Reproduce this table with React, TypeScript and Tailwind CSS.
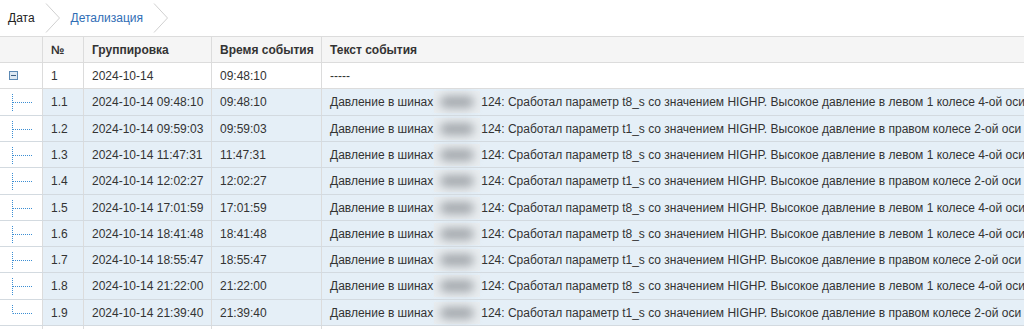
import React from "react";

type Row = {
  n: string;
  group: string;
  time: string;
  param: "t8_s" | "t1_s";
};

const rows: Row[] = [
  { n: "1.1", group: "2024-10-14 09:48:10", time: "09:48:10", param: "t8_s" },
  { n: "1.2", group: "2024-10-14 09:59:03", time: "09:59:03", param: "t1_s" },
  { n: "1.3", group: "2024-10-14 11:47:31", time: "11:47:31", param: "t8_s" },
  { n: "1.4", group: "2024-10-14 12:02:27", time: "12:02:27", param: "t1_s" },
  { n: "1.5", group: "2024-10-14 17:01:59", time: "17:01:59", param: "t8_s" },
  { n: "1.6", group: "2024-10-14 18:41:48", time: "18:41:48", param: "t8_s" },
  { n: "1.7", group: "2024-10-14 18:55:47", time: "18:55:47", param: "t1_s" },
  { n: "1.8", group: "2024-10-14 21:22:00", time: "21:22:00", param: "t8_s" },
  { n: "1.9", group: "2024-10-14 21:39:40", time: "21:39:40", param: "t1_s" },
];

// row heights so that lines land on whole pixels
const heights = [
  "h-[27px]",
  "h-[26px]",
  "h-[26px]",
  "h-[27px]",
  "h-[26px]",
  "h-[26px]",
  "h-[26px]",
  "h-[27px]",
  "h-[26px]",
];

const eventText = (p: Row["param"]) =>
  p === "t8_s"
    ? "124: Сработал параметр t8_s со значением HIGHP. Высокое давление в левом 1 колесе 4-ой оси"
    : "124: Сработал параметр t1_s со значением HIGHP. Высокое давление в правом колесе 2-ой оси Ведущего моста";

const Chevron = () => (
  <svg width="16" height="30" viewBox="0 0 16 30" className="shrink-0">
    <path d="M1 0.5 L14.5 15 L1 29.5" fill="none" stroke="#d0d0d0" strokeWidth="1" />
  </svg>
);

// tree connector for child rows
const TreeLine = ({ last }: { last: boolean }) => (
  <svg width="42" height="24" viewBox="0 0 42 24" className="block">
    <line
      x1="12.5"
      y1="4"
      x2="12.5"
      y2={last ? 12.5 : 21}
      stroke="#3b8ed3"
      strokeWidth="1"
      strokeDasharray="1 1"
    />
    <line x1="13" y1="12.5" x2="33" y2="12.5" stroke="#3b8ed3" strokeWidth="1" strokeDasharray="1 1" />
  </svg>
);

const Blur = () => (
  <span className="relative mx-[1px] inline-block h-[22px] w-[46px] shrink-0 bg-[#e9edf0] align-middle">
    <span className="absolute inset-x-[6px] inset-y-[5px] rounded-full bg-[#a3a8ad] blur-[5px]"></span>
  </span>
);

const grid = "grid grid-cols-[42px_41px_128px_110px_1fr] grid-rows-[minmax(0,1fr)]";
const cell = "flex min-h-0 items-center overflow-hidden whitespace-nowrap border-l border-[#dcdcdc] pl-2";

export default function App() {
  return (
    <div className="h-[329px] w-[1024px] overflow-hidden bg-white font-['Liberation_Sans',Arial,sans-serif] text-[12px] text-[#333]">
      {/* breadcrumbs */}
      <div className="flex h-[36px] items-center">
        <span className="ml-[8px] mr-[10px] text-[#222]">Дата</span>
        <Chevron />
        <span className="ml-[10px] mr-[10px] text-[#2f6db5]">Детализация</span>
        <Chevron />
      </div>

      {/* header */}
      <div className={`${grid} h-[27px] border-y border-[#dcdcdc] bg-[#f5f5f5] font-bold text-[#333]`}>
        <div></div>
        <div className={cell}>№</div>
        <div className={cell}>Группировка</div>
        <div className={cell}>Время события</div>
        <div className={cell}>Текст события</div>
      </div>

      {/* group row */}
      <div className={`${grid} h-[26px] border-b border-[#dcdcdc] bg-white`}>
        <div className="flex items-center pl-[9px]">
          <span className="flex h-[9px] w-[9px] items-center justify-center border border-[#5c89b4] bg-[#dde8f2]">
            <span className="h-[1px] w-[5px] bg-[#3d5f82]"></span>
          </span>
        </div>
        <div className={cell}>1</div>
        <div className={cell}>2024-10-14</div>
        <div className={cell}>09:48:10</div>
        <div className={cell}>-----</div>
      </div>

      {rows.map((r, i) => (
        <div key={r.n} className={`${grid} ${heights[i]} border-b border-[#d3dae0]`}>
          <div className="flex min-h-0 items-center bg-white">
            <TreeLine last={i === rows.length - 1} />
          </div>
          <div className={`${cell} bg-[#e5eff7]`}>{r.n}</div>
          <div className={`${cell} bg-[#e5eff7]`}>{r.group}</div>
          <div className={`${cell} bg-[#e5eff7]`}>{r.time}</div>
          <div className={`${cell} bg-[#e5eff7]`}>
            <span className="shrink-0">Давление в шинах</span>
            <Blur />
            <span className="shrink-0">{eventText(r.param)}</span>
          </div>
        </div>
      ))}

      {/* empty trailing row */}
      <div className={`${grid} h-[10px]`}>
        <div></div>
        <div className="border-l border-[#dcdcdc]"></div>
        <div className="border-l border-[#dcdcdc]"></div>
        <div className="border-l border-[#dcdcdc]"></div>
        <div className="border-l border-[#dcdcdc]"></div>
      </div>
    </div>
  );
}
